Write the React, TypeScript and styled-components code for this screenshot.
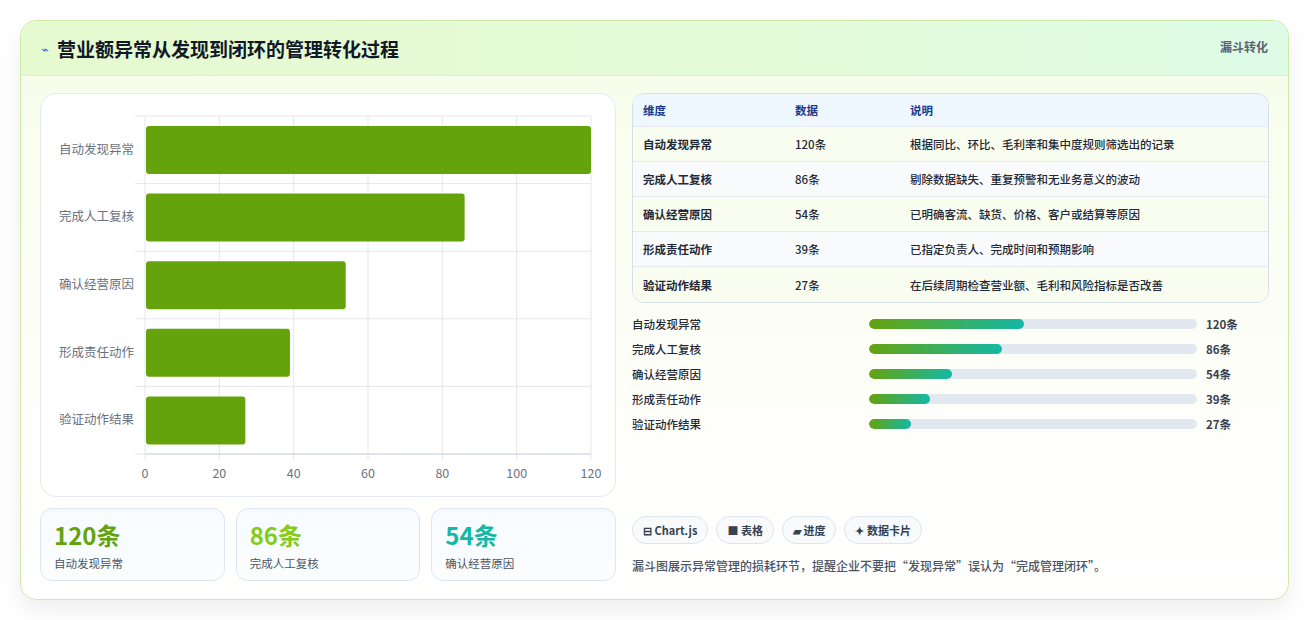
import React from "react";
import styled, { createGlobalStyle } from "styled-components";

const Global = createGlobalStyle`
  html, body { margin: 0; padding: 0; background: #fff; }
  body { font-family: "Noto Sans CJK SC", "Noto Sans", sans-serif; }
  * { box-sizing: border-box; }
`;

const Page = styled.div`
  padding: 20px 20px 20px 20px;
  width: 1309px;
  height: 620px;
`;
const Card = styled.div`
  width: 1269px;
  height: 580px;
  border: 1px solid #cfeaa6;
  border-radius: 16px;
  background: linear-gradient(180deg, #f6fde9 0%, #fdfef8 60%, #ffffff 100%);
  box-shadow: 0 10px 24px rgba(0,0,0,0.07);
  overflow: hidden;
  display: flex;
  flex-direction: column;
`;
const Header = styled.div`
  height: 55px;
  flex: none;
  display: flex;
  align-items: center;
  justify-content: space-between;
  padding: 0 20px;
  background: linear-gradient(90deg, #e6fad0 0%, #e4fbd8 60%, #ddfbe6 100%);
  border-bottom: 1px solid #e2eed4;
`;
const Title = styled.h1`
  margin: 0;
  font-size: 19px;
  font-weight: 700;
  color: #111827;
  display: flex;
  align-items: center;
  gap: 8px;
`;
const TitleIcon = styled.span`
  color: #3b6fd8;
  font-size: 13px;
  font-weight: 400;
`;
const Tag = styled.span`
  font-size: 12px;
  font-weight: 700;
  color: #5b6473;
  align-self: flex-start;
  margin-top: 17px;
`;
const Body = styled.div`
  flex: 1;
  display: grid;
  grid-template-columns: 576px 637px;
  gap: 16px;
  padding: 17px 19px 18px 19px;
`;
const Col = styled.div`
  display: flex;
  flex-direction: column;
`;
const ChartCard = styled.div`
  height: 404px;
  background: #fff;
  border: 1px solid #e4eaf0;
  border-radius: 16px;
  position: relative;
`;
const Stats = styled.div`
  margin-top: 11px;
  display: grid;
  grid-template-columns: repeat(3, 1fr);
  gap: 11px;
`;
const Stat = styled.div`
  height: 73px;
  border: 1px solid #dde6ef;
  border-radius: 12px;
  background: linear-gradient(180deg, #f7fbff, #fbfdfe);
  padding: 10px 13px;
`;
const StatNum = styled.div<{ $c: string }>`
  font-size: 24px;
  font-weight: 700;
  color: ${p => p.$c};
  line-height: 32px;
`;
const StatLabel = styled.div`
  font-size: 11.5px;
  color: #4b5563;
  margin-top: 4px;
`;
const Table = styled.div`
  border: 1px solid #d7e0ea;
  border-radius: 12px;
  overflow: hidden;
  background: #fff;
`;
const TRow = styled.div<{ $bg: string; $h: number }>`
  display: grid;
  grid-template-columns: 152px 115px 1fr;
  height: ${p => p.$h}px;
  align-items: center;
  padding-left: 10px;
  background: ${p => p.$bg};
  border-bottom: 1px solid #e3e9ef;
  font-size: 11.5px;
  color: #1f2937;
  &:last-child { border-bottom: none; }
`;
const TH = styled.span`
  color: #1e3a8a;
  font-weight: 700;
`;
const TD = styled.span<{ $b?: boolean }>`
  font-weight: ${p => (p.$b ? 700 : 500)};
`;
const Progress = styled.div`
  margin-top: 12px;
  display: flex;
  flex-direction: column;
  gap: 7px;
`;
const PRow = styled.div`
  display: grid;
  grid-template-columns: 237px 328px auto;
  align-items: center;
  height: 18px;
  font-size: 11.5px;
  font-weight: 500;
  color: #1f2937;
`;
const Track = styled.div`
  height: 10px;
  border-radius: 5px;
  background: #e2e8f0;
  overflow: hidden;
`;
const Fill = styled.div`
  height: 100%;
  border-radius: 5px;
  background: linear-gradient(90deg, #65a30d, #14b8a6);
`;
const PVal = styled.span`
  padding-left: 9px;
  font-weight: 700;
  color: #374151;
`;
const Chips = styled.div`
  margin-top: auto;
  display: flex;
  gap: 8px;
`;
const Chip = styled.span`
  height: 28px;
  padding: 0 10px;
  border-radius: 14px;
  border: 1px solid #dde5ee;
  background: #f8fafc;
  font-size: 11px;
  font-weight: 700;
  color: #374151;
  display: inline-flex;
  align-items: center;
  gap: 4px;
`;
const Note = styled.p`
  margin: 13px 0 7px;
  font-size: 12px;
  font-weight: 500;
  color: #4b5563;
`;
const AxisLabel = styled.text`
  font-family: "Noto Sans CJK SC", sans-serif;
  font-size: 12.5px;
  fill: #6b7280;
`;

const data = [
  ["自动发现异常", 120, "根据同比、环比、毛利率和集中度规则筛选出的记录", 155],
  ["完成人工复核", 86, "剔除数据缺失、重复预警和无业务意义的波动", 133],
  ["确认经营原因", 54, "已明确客流、缺货、价格、客户或结算等原因", 83],
  ["形成责任动作", 39, "已指定负责人、完成时间和预期影响", 61],
  ["验证动作结果", 27, "在后续周期检查营业额、毛利和风险指标是否改善", 42],
] as const;

function Chart() {
  // chart card origin at (40,93)
  const x0 = 104, x1 = 550, y0 = 22, y1 = 360;
  const rowH = (y1 - y0) / 5;
  const sx = (v: number) => x0 + ((x1 - x0) * v) / 120;
  return (
    <svg width="576" height="404" style={{ display: "block" }}>
      {[0, 20, 40, 60, 80, 100, 120].map(t => (
        <g key={t}>
          <line x1={sx(t)} x2={sx(t)} y1={y0} y2={y1 + 6} stroke="#e5e7eb" />
          <AxisLabel x={sx(t)} y={384} textAnchor="middle">{t}</AxisLabel>
        </g>
      ))}
      {[0, 1, 2, 3, 4, 5].map(i => (
        <line key={i} x1={x0 - 10} x2={x1} y1={y0 + i * rowH} y2={y0 + i * rowH} stroke="#e5e7eb" />
      ))}
      <line x1={x0} x2={x1} y1={y1} y2={y1} stroke="#cbd5e1" />
      {data.map(([name, v], i) => (
        <g key={name}>
          <rect x={x0 + 1} y={y0 + i * rowH + 10} width={sx(v) - x0 - 1} height={48} rx={3} fill="#65a30d" />
          <AxisLabel x={x0 - 11} y={y0 + i * rowH + rowH / 2 + 4} textAnchor="end">{name}</AxisLabel>
        </g>
      ))}
    </svg>
  );
}

export default function App() {
  return (
    <Page>
      <Global />
      <Card>
        <Header>
          <Title><TitleIcon>⌁</TitleIcon>营业额异常从发现到闭环的管理转化过程</Title>
          <Tag>漏斗转化</Tag>
        </Header>
        <Body>
          <Col>
            <ChartCard><Chart /></ChartCard>
            <Stats>
              <Stat><StatNum $c="#65a30d">120条</StatNum><StatLabel>自动发现异常</StatLabel></Stat>
              <Stat><StatNum $c="#84cc16">86条</StatNum><StatLabel>完成人工复核</StatLabel></Stat>
              <Stat><StatNum $c="#14b8a6">54条</StatNum><StatLabel>确认经营原因</StatLabel></Stat>
            </Stats>
          </Col>
          <Col>
            <Table>
              <TRow $bg="#eef6fe" $h={33}><TH>维度</TH><TH>数据</TH><TH>说明</TH></TRow>
              {data.map(([n, v, d], i) => (
                <TRow key={n} $bg={i % 2 === 0 ? "#f8fdef" : "#f8fafc"} $h={35}>
                  <TD $b>{n}</TD><TD>{v}条</TD><TD>{d}</TD>
                </TRow>
              ))}
            </Table>
            <Progress>
              {data.map(([n, v, , w]) => (
                <PRow key={n}>
                  <span>{n}</span>
                  <Track><Fill style={{ width: `${w}px` }} /></Track>
                  <PVal>{v}条</PVal>
                </PRow>
              ))}
            </Progress>
            <Chips>
              <Chip>⊟ Chart.js</Chip>
              <Chip>■ 表格</Chip>
              <Chip>▰ 进度</Chip>
              <Chip>✦ 数据卡片</Chip>
            </Chips>
            <Note>漏斗图展示异常管理的损耗环节，提醒企业不要把“发现异常”误认为“完成管理闭环”。</Note>
          </Col>
        </Body>
      </Card>
    </Page>
  );
}
